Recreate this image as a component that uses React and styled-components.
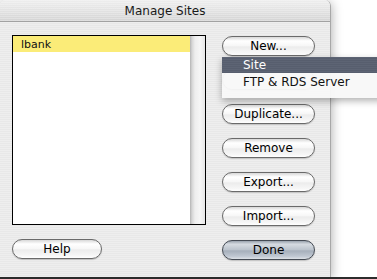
import React from 'react'
import styled, { createGlobalStyle } from 'styled-components'

const GlobalStyle = createGlobalStyle`
  html, body {
    margin: 0;
    padding: 0;
    background: #ffffff;
    overflow: hidden;
  }
  * { box-sizing: border-box; }
`;

const Screen = styled.div`
  width: 377px;
  height: 279px;
  display: flex;
  flex-direction: column;
  position: relative;
  background: #ffffff;
  font-family: "DejaVu Sans", "Liberation Sans", sans-serif;
`;

const Desk = styled.div`
  height: 277px;
  display: flex;
`;

const Floor = styled.div`
  flex: 1;
  background: #2c2c2c;
`;

const Window = styled.div`
  width: 331px;
  height: 277px;
  border-radius: 6px 6px 0 0;
  border-right: 1px solid #a8a8a8;
  box-shadow: 0 2px 12px rgba(0, 0, 0, 0.35);
  background: repeating-linear-gradient(
    to bottom,
    #eeeeee 0px,
    #eeeeee 1px,
    #e8e8e8 1px,
    #e8e8e8 2px
  );
  display: flex;
  flex-direction: column;
  overflow: hidden;
`;

const TitleBar = styled.div`
  height: 22px;
  display: flex;
  align-items: center;
  justify-content: center;
  font-size: 12px;
  color: #1a1a1a;
  border-bottom: 1px solid #a2a2a2;
  background:
    repeating-linear-gradient(to bottom, rgba(255,255,255,0.25) 0 1px, transparent 1px 2px),
    linear-gradient(to bottom, #eeeeee 0%, #e2e2e2 50%, #d4d4d4 100%);
`;

const Body = styled.div`
  flex: 1;
  display: grid;
  grid-template-columns: 194px 93px;
  column-gap: 16px;
  padding: 13px 0 0 12px;
`;

const LeftColumn = styled.div`
  display: flex;
  flex-direction: column;
  gap: 14px;
`;

const ListBox = styled.div`
  height: 190px;
  border: 1px solid #000;
  background: #fff;
  display: flex;
`;

const ListItems = styled.div`
  flex: 1;
`;

const ListRow = styled.div`
  height: 16px;
  padding-left: 8px;
  display: flex;
  align-items: center;
  font-size: 11px;
  color: #111;
  background: ${p => (p.$selected ? '#fbec78' : 'transparent')};
`;

const ScrollTrack = styled.div`
  width: 15px;
  background: linear-gradient(
    to right,
    #b4b4b4 0px,
    #d6d6d6 2px,
    #eeeeee 5px,
    #f6f6f6 10px,
    #e6e6e6 15px
  );
`;

const ButtonColumn = styled.div`
  display: flex;
  flex-direction: column;
  gap: 14px;
  padding-top: 1px;
`;

const Button = styled.button`
  width: ${p => p.$width || 93}px;
  height: 20px;
  padding: 0 0 1px;
  border: 1px solid ${p => (p.$primary ? '#454b54' : '#6a6a6a')};
  border-radius: 10px;
  font-family: "DejaVu Sans", "Liberation Sans", sans-serif;
  font-size: 12px;
  color: #000;
  box-shadow: 0 1px 1px rgba(0, 0, 0, 0.18);
  background: ${p =>
    p.$primary
      ? 'linear-gradient(to bottom, #9aa3ae 0%, #d6dbe1 18%, #bcc4cd 48%, #a6afbb 55%, #c0c8d2 85%, #dde1e6 100%)'
      : 'linear-gradient(to bottom, #d8d8d8 0%, #ffffff 22%, #f7f7f7 48%, #ececec 55%, #f6f6f6 85%, #ffffff 100%)'};
`;

const Menu = styled.div`
  position: absolute;
  left: 222px;
  top: 57px;
  width: 170px;
  padding-bottom: 7px;
  background: rgba(248, 248, 248, 0.96);
  box-shadow: 0 3px 7px rgba(0, 0, 0, 0.3);
`;

const MenuItem = styled.div`
  height: 16px;
  margin-bottom: 1px;
  padding-left: 21px;
  display: flex;
  align-items: center;
  font-size: 12px;
  color: ${p => (p.$active ? '#ffffff' : '#111111')};
  background: ${p =>
    p.$active
      ? 'repeating-linear-gradient(to bottom, #5d6474 0 1px, #575e6e 1px 2px)'
      : 'transparent'};
`;

// the second button sits under the open menu; its label is never seen
const sideButtons = ['New...', '', 'Duplicate...', 'Remove', 'Export...', 'Import...'];

export default function App() {
  return (
    <>
      <GlobalStyle />
      <Screen>
        <Desk>
          <Window>
            <TitleBar>Manage Sites</TitleBar>
            <Body>
              <LeftColumn>
                <ListBox>
                  <ListItems>
                    <ListRow $selected>lbank</ListRow>
                  </ListItems>
                  <ScrollTrack />
                </ListBox>
                <Button $width={90}>Help</Button>
              </LeftColumn>
              <ButtonColumn>
                {sideButtons.map((label, i) => (
                  <Button key={i}>{label}</Button>
                ))}
                <Button $primary>Done</Button>
              </ButtonColumn>
            </Body>
          </Window>
        </Desk>
        <Floor />
        <Menu>
          <MenuItem $active>Site</MenuItem>
          <MenuItem>FTP &amp; RDS Server</MenuItem>
        </Menu>
      </Screen>
    </>
  )
}
